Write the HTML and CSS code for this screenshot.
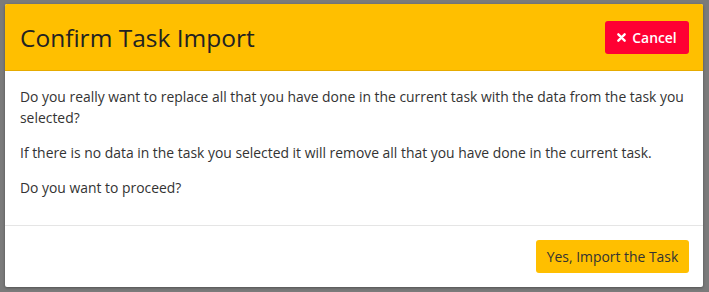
FILE: index.html
```html
<!DOCTYPE html>
<html>
<head>
<meta charset="utf-8">
<link rel="stylesheet" href="styles.css">
</head>
<body>
<div class="modal">
  <div class="modal-header">
    <h1 class="title">Confirm Task Import</h1>
    <button class="btn btn-cancel"><svg class="x-icon" viewBox="0 0 10 10" width="9" height="9"><path d="M1.5 1.5 L8.5 8.5 M8.5 1.5 L1.5 8.5" stroke="#fff" stroke-width="2.6" stroke-linecap="round"/></svg>Cancel</button>
  </div>
  <div class="modal-body">
    <p>Do you really want to replace all that you have done in the current task with the data from the task you selected?</p>
    <p>If there is no data in the task you selected it will remove all that you have done in the current task.</p>
    <p>Do you want to proceed?</p>
  </div>
  <div class="modal-footer">
    <button class="btn btn-yes">Yes, Import the Task</button>
  </div>
</div>
</body>
</html>
```
FILE: styles.css
```css
html, body {
  margin: 0;
  padding: 0;
  height: 100%;
}
body {
  background: #7b7b7b;
  font-family: "Open Sans", "DejaVu Sans", sans-serif;
  color: #333;
  padding: 4px 6px 5px 5px;
  box-sizing: border-box;
}
.modal {
  background: #fff;
  height: 283px;
  display: flex;
  flex-direction: column;
  box-shadow: 0 1px 3px rgba(0,0,0,0.35);
  border-radius: 2px;
  overflow: hidden;
}
.modal-header {
  background: #ffbf00;
  border-bottom: 1px solid #e6ab00;
  height: 66px;
  display: flex;
  align-items: center;
  justify-content: space-between;
  padding: 0 14px 0 15px;
  flex-shrink: 0;
}
.title {
  margin: 0;
  font-size: 24.5px;
  font-weight: 400;
  color: #222;
  letter-spacing: 0;
}
.btn {
  font-family: "Open Sans", "DejaVu Sans", sans-serif;
  font-size: 13.9px;
  border: none;
  border-radius: 3px;
  height: 33px;
  display: inline-flex;
  align-items: center;
  justify-content: center;
  padding: 0 8px;
  white-space: nowrap;
  cursor: pointer;
}
.btn-cancel {
  background: #ff0033;
  color: #fff;
  font-weight: 600;
  width: 84px;
  margin-top: 1px;
}
.x-icon {
  margin-right: 6px;
}
.modal-body {
  padding: 15px 8px 0 15px;
  flex: 1;
  border-bottom: 1px solid #e5e5e5;
}
.modal-body p {
  margin: 0 0 14px 0;
  font-size: 13.9px;
  line-height: 21px;
  color: #333;
}
.modal-footer {
  display: flex;
  justify-content: flex-end;
  padding: 14px 14px 14px 15px;
  height: 33px;
  flex-shrink: 0;
}
.btn-yes {
  background: #ffbf00;
  color: #333;
  width: 153px;
  font-weight: 400;
}
```
